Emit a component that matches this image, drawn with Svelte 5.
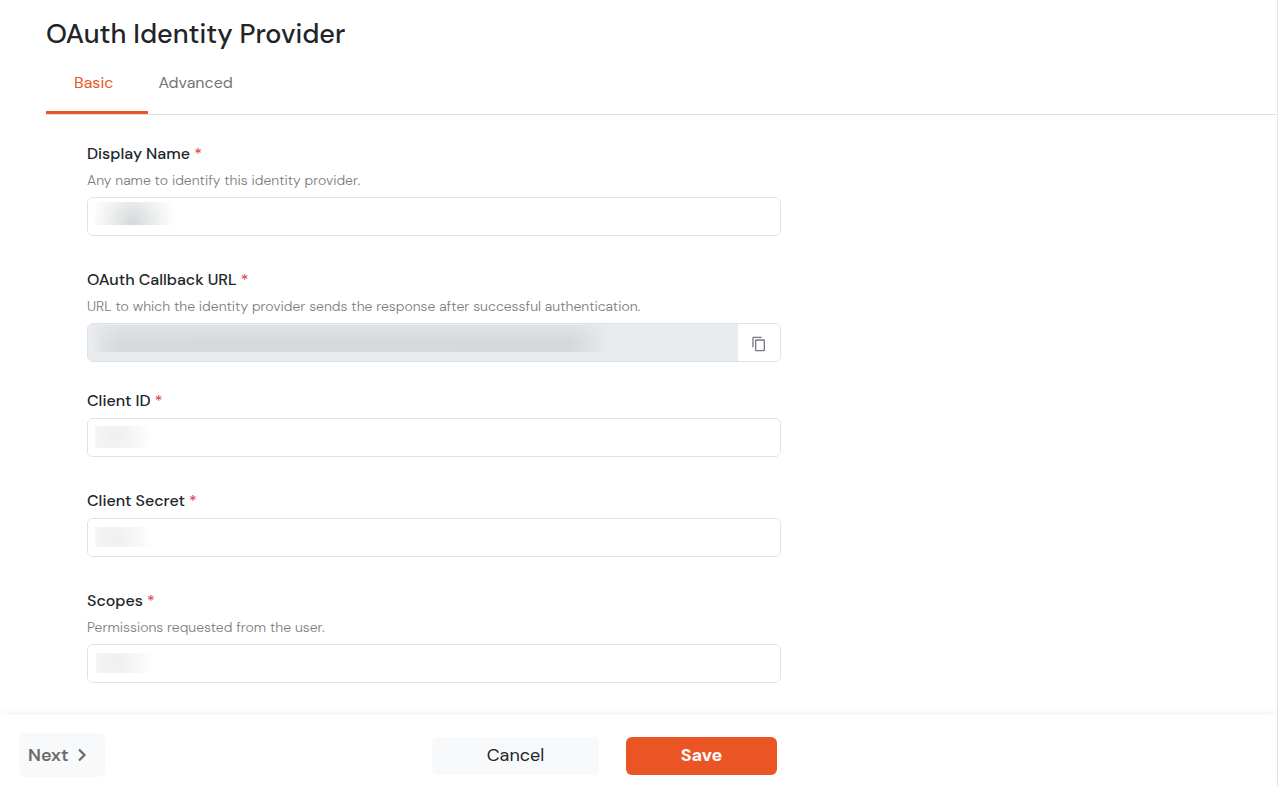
<script>
  let tab = $state('Basic');
  const tabs = ['Basic', 'Advanced'];
  const fields = [
    { id: 'display-name', label: 'Display Name', help: 'Any name to identify this identity provider.', mask: 'name' },
    { id: 'callback-url', label: 'OAuth Callback URL', help: 'URL to which the identity provider sends the response after successful authentication.', mask: 'url', copy: true },
    { id: 'client-id', label: 'Client ID', mask: 'id' },
    { id: 'client-secret', label: 'Client Secret', mask: 'secret' },
    { id: 'scopes', label: 'Scopes', help: 'Permissions requested from the user.', mask: 'scopes' }
  ];
</script>

<div class="page">
  <main>
    <h1>OAuth Identity Provider</h1>
    <nav class="tabs">
      {#each tabs as name}
        <button type="button" class="tab" class:active={tab === name} onclick={() => (tab = name)}>{name}</button>
      {/each}
    </nav>
    <form id="provider">
      {#each fields as f}
        <div class="field" class:tight={f.copy}>
          <label for={f.id}>{f.label} <span class="star">*</span></label>
          {#if f.help}<p class="help">{f.help}</p>{/if}
          <div class="control">
            <input id={f.id} type="text" required readonly={f.copy} class:locked={f.copy} />
            <span class="mask {f.mask}"></span>
            {#if f.copy}
              <button type="button" class="copy" aria-label="Copy">
                <svg width="16" height="16" viewBox="0 0 24 24" fill="#747a80"><path d="M16 1H4c-1.100 0-2 .9-2 2v14h2V3h12V1zm3 4H8c-1.100 0-2 .9-2 2v14c0 1.100.9 2 2 2h11c1.100 0 2-.9 2-2V7c0-1.100-.9-2-2-2zm0 16H8V7h11v14z" /></svg>
              </button>
            {/if}
          </div>
        </div>
      {/each}
    </form>
  </main>
  <footer>
    <div class="actions">
      <button type="button" class="next">Next
        <svg width="10" height="14" viewBox="0 0 10 14" fill="none" stroke="#6b6b6b" stroke-width="2.200"><path d="M2 1.500 7.500 7 2 12.500" /></svg>
      </button>
      <div class="pair">
        <button type="button" class="cancel">Cancel</button>
        <button type="submit" form="provider" class="save">Save</button>
      </div>
    </div>
  </footer>
</div>

<style>
  .page {
    box-sizing: border-box;
    min-height: 100vh;
    display: flex;
    flex-direction: column;
    border-right: 1px solid #e6e6e6;
    background: #fff;
    color: #212529;
    font-family: 'DM Sans', Inter, sans-serif;
  }
  button, input { font: inherit; box-sizing: border-box; }
  button { border: 0; cursor: pointer; }
  main { flex: 1; padding: 16px 0 0 46px; }
  h1 { margin: 0; font-size: 27px; line-height: 36px; font-weight: 500; }
  .tabs { display: flex; margin-top: 8px; border-bottom: 1px solid #e0e0e0; }
  .tab {
    height: 54px;
    padding: 0 10px 7px;
    background: none;
    color: #757575;
    font-size: 16px;
    border-bottom: 3px solid transparent;
  }
  .tab.active { padding: 0 35px 7px 28px; color: #eb5424; border-bottom-color: #eb5424; }
  form { max-width: 694px; padding: 27px 16px 31px 41px; }
  .field + .field { margin-top: 32px; }
  .field.tight + .field { margin-top: 27px; }
  label { display: block; font-size: 16px; line-height: 24px; font-weight: 500; }
  .star { color: #dc3545; font-weight: 400; }
  .help { margin: 3px 0 0; color: #7c7c7c; font-size: 14px; line-height: 23px; font-weight: 300; }
  .control {
    position: relative;
    display: flex;
    height: 39px;
    margin-top: 5px;
    box-sizing: border-box;
    border: 1px solid #dee2e6;
    border-radius: 6px;
    overflow: hidden;
  }
  input { flex: 1; min-width: 0; border: 0; padding: 0 12px; outline: none; background: #fff; font-size: 15px; }
  .locked { background: #e9ecef; }
  .copy { display: grid; place-items: center; width: 42px; padding: 2px 0 0; background: #fff; }
  .mask { position: absolute; pointer-events: none; left: 7px; top: 8px; width: 62px; height: 20px;
    background: radial-gradient(ellipse 38px 40px at 19px 10px, #eeefef, #f5f5f5 50%, #fff); }
  .name { top: 4px; width: 84px; height: 23px;
    background: radial-gradient(ellipse 44px 48px at 38px 22px, #d5d7d9, #eff0f0 56%, #fafafa 85%, #fff); }
  .url { left: 4px; top: 1px; width: 516px; height: 27px;
    background: linear-gradient(90deg, #d6dadd00, #d6dadd99 12px, #d6dadd 28px, #d5d9dc 480px, #d6dadd88 500px, #d6dadd00);
    mask-image: linear-gradient(#0007, #000 60%); }
  .id { top: 7px; height: 22px; }
  .scopes { left: 8px; }
  footer { padding: 18px 19px 9px; background: #fff; box-shadow: 0 -2px 10px #0000000d; }
  .actions { display: flex; align-items: center; justify-content: space-between; max-width: 758px; }
  .pair { display: flex; gap: 27px; padding-top: 2px; }
  .pair button { height: 38px; border-radius: 6px; font-size: 18px; padding-bottom: 3px; }
  .next { display: flex; align-items: center; justify-content: flex-start; gap: 9px; width: 86px; height: 44px; padding: 0 9px; border-radius: 6px; background: #f8f9fb; color: #6b6b6b; font-size: 18px; font-weight: 600; }
  .cancel { width: 167px; background: #f8f9fb; color: #212529; }
  .save { width: 151px; background: #eb5424; color: #fff; font-weight: 700; }
</style>
